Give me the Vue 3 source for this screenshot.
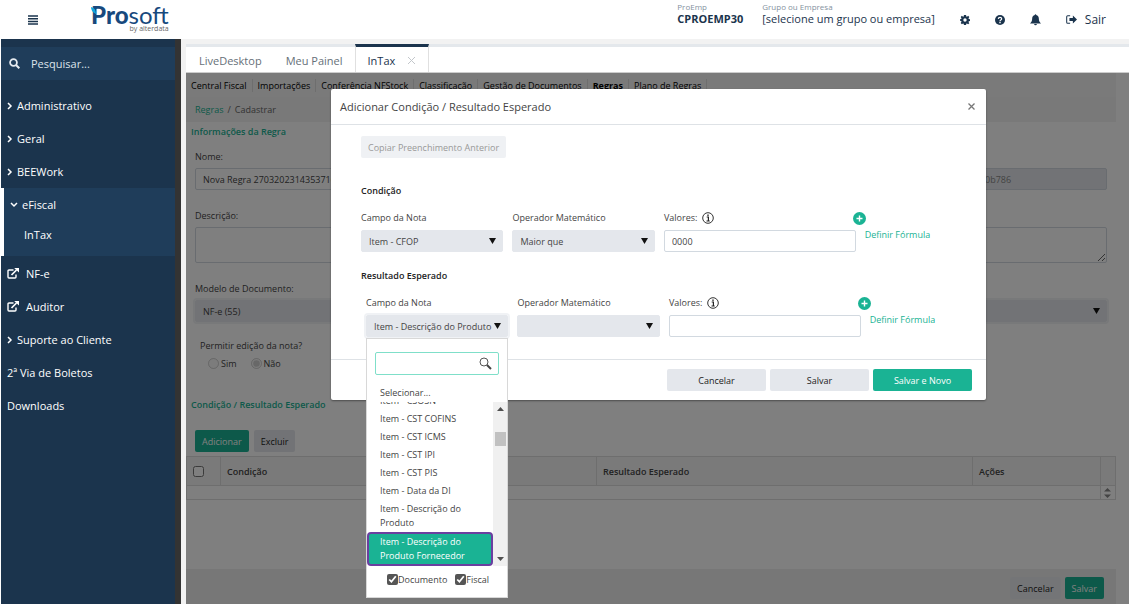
<script setup>
import { ref } from 'vue';

const menuTop = ['Administrativo', 'Geral', 'BEEWork'];
const tabs = ['LiveDesktop', 'Meu Painel'];
const sections = [
  'Central Fiscal',
  'Importações',
  'Conferência NFStock',
  'Classificação',
  'Gestão de Documentos',
  'Regras',
  'Plano de Regras',
];
const campos = [
  'Item - CSOSN',
  'Item - CST COFINS',
  'Item - CST ICMS',
  'Item - CST IPI',
  'Item - CST PIS',
  'Item - Data da DI',
  'Item - Descrição do Produto',
  'Item - Descrição do Produto Fornecedor',
];

const selected = ref('Item - Descrição do Produto Fornecedor');
const busca = ref('');
const edicao = ref('nao');
const documento = ref(true);
const fiscal = ref(true);

const rows = [
  { id: 'cond', title: 'Condição', campo: 'Item - CFOP', operador: 'Maior que', valor: '0000', open: false },
  { id: 'res', title: 'Resultado Esperado', campo: 'Item - Descrição do Produto', operador: '', valor: '', open: true },
];
</script>

<template>
  <div class="app">
    <header class="topbar">
      <button class="icon-btn burger" aria-label="Menu">
        <svg width="10" height="10" viewBox="0 0 10 10"><path d="M0 1h10M0 3.7h10M0 6.4h10M0 9.1h10" stroke="#1b344d" stroke-width="1.5" /></svg>
      </button>
      <a href="#" class="logo" aria-label="Prosoft by alterdata">
        <svg class="logo-mark" width="6" height="8" viewBox="0 0 6 8"><path d="M0 0Q5 1 5 7Q0 5 0 0Z" fill="#12a5dc" /></svg>
        <span class="logo-name"><b>Pro</b>soft</span>
        <span class="logo-by">by <b>alterdata</b></span>
      </a>
      <div class="account">
        <div class="info">
          <small>ProEmp</small>
          <strong>CPROEMP30</strong>
        </div>
        <div class="info company">
          <small>Grupo ou Empresa</small>
          <span>[selecione um grupo ou empresa]</span>
        </div>
        <button class="icon-btn" aria-label="Configurações">
          <svg width="10" height="10" viewBox="0 0 16 16"><path fill="#1b344d" fill-rule="evenodd" d="M6.300 0h3.400l.4 2.200 1.100.5L13 1.300l1.900 1.900-1.300 1.900.5 1.200 1.900.4v2.800l-1.900.4-.5 1.200 1.300 1.900-1.900 1.900-1.900-1.300-1.100.5L9.700 16H6.300l-.4-2-1.100-.5L3 14.700 1.100 12.800l1.300-1.900-.5-1.200L0 9.300V6.700l1.900-.4.5-1.200-1.300-1.900L3 1.300l1.800 1.400 1.100-.5zM8 5.300a2.700 2.700 0 1 0 0 5.400 2.700 2.700 0 0 0 0-5.400z" /></svg>
        </button>
        <button class="icon-btn" aria-label="Ajuda">
          <svg width="10" height="10" viewBox="0 0 16 16"><circle cx="8" cy="8" r="8" fill="#1b344d" /><path d="M5.300 6.200Q5.500 3.700 8 3.700T10.700 6Q10.700 7.300 9.300 8Q8 8.700 8 9.800" fill="none" stroke="#fff" stroke-width="2" /><rect x="6.900" y="11" width="2.200" height="2.200" fill="#fff" /></svg>
        </button>
        <button class="icon-btn" aria-label="Notificações">
          <svg width="11" height="12" viewBox="0 0 16 17"><path fill="#1b344d" d="M8 0a1 1 0 0 1 1 1.200C11.500 1.700 12.800 3.600 12.800 6c0 4 1.300 6 3.200 7.500H0C1.900 12 3.200 10 3.200 6c0-2.400 1.300-4.300 3.800-4.800A1 1 0 0 1 8 0zM6 14.200h4a2 2 0 0 1-4 0z" /></svg>
        </button>
        <a href="#" class="exit">
          <svg width="11" height="9" viewBox="0 0 16 13"><path d="M6 1H2.500Q1 1 1 2.500v8Q1 12 2.500 12H6" fill="none" stroke="#1b344d" stroke-width="1.500" /><path fill="#1b344d" d="M5 4.200h5V.700l6 5.800-6 5.800V8.800H5z" /></svg>
          Sair
        </a>
      </div>
    </header>

    <div class="layout">
      <aside class="sidebar">
        <label class="search">
          <svg width="11" height="11" viewBox="0 0 11 11"><circle cx="4.500" cy="4.500" r="3.400" fill="none" stroke="#e6ebf0" stroke-width="1.800" /><path d="M7 7l3.300 3.300" stroke="#e6ebf0" stroke-width="2" /></svg>
          <input type="text" placeholder="Pesquisar..." aria-label="Pesquisar" />
        </label>
        <nav>
          <a v-for="item in menuTop" :key="item" href="#" class="nav-item">
            <svg width="6" height="8" viewBox="0 0 6 8"><path d="M1 1l3 3-3 3" fill="none" stroke="#fff" stroke-width="1.500" /></svg>
            {{ item }}
          </a>
          <div class="nav-group">
            <a href="#" class="nav-item">
              <svg width="8" height="6" viewBox="0 0 8 6"><path d="M1 1l3 3 3-3" fill="none" stroke="#fff" stroke-width="1.500" /></svg>
              eFiscal
            </a>
            <a href="#" class="nav-item nav-sub">InTax</a>
          </div>
          <a v-for="item in ['NF-e', 'Auditor']" :key="item" href="#" class="nav-item external">
            <svg width="12" height="11" viewBox="0 0 12 11"><path d="M6.500 2H2Q1 2 1 3v6q0 1 1 1h6q1 0 1-1V6.500" fill="none" stroke="#fff" stroke-width="1.400" /><path d="M4.500 7l5-5" stroke="#fff" stroke-width="1.700" /><path d="M7.200 0H12v4.600z" fill="#fff" /></svg>
            {{ item }}
          </a>
          <a href="#" class="nav-item">
            <svg width="6" height="8" viewBox="0 0 6 8"><path d="M1 1l3 3-3 3" fill="none" stroke="#fff" stroke-width="1.500" /></svg>
            Suporte ao Cliente
          </a>
          <a href="#" class="nav-item">2ª Via de Boletos</a>
          <a href="#" class="nav-item">Downloads</a>
        </nav>
      </aside>

      <main class="main">
        <div class="tabs">
          <button v-for="tab in tabs" :key="tab" class="tab">{{ tab }}</button>
          <button class="tab active">
            InTax
            <svg width="9" height="9" viewBox="0 0 9 9"><path d="M1 1l7 7M8 1L1 8" stroke="#c3c7cb" stroke-width="1" /></svg>
          </button>
        </div>

        <div class="workspace">
          <div class="page">
            <nav class="sections">
              <a v-for="s in sections" :key="s" href="#" :class="{ current: s === 'Regras' }">{{ s }}</a>
            </nav>
            <div class="crumbs"><a href="#">Regras</a> <span>/</span> <span>Cadastrar</span></div>

            <h2>Informações da Regra</h2>
            <form class="form" @submit.prevent>
              <div class="two">
                <div class="field">
                  <label for="nome">Nome:</label>
                  <input id="nome" type="text" value="Nova Regra 27032023143537166" />
                </div>
                <div class="field right">
                  <input type="text" value="0b786" disabled aria-label="Identificador" />
                </div>
              </div>
              <div class="field">
                <label for="descricao">Descrição:</label>
                <textarea id="descricao"></textarea>
              </div>
              <div class="field">
                <label for="modelo">Modelo de Documento:</label>
                <div class="select glow">
                  <select id="modelo"><option>NF-e (55)</option></select>
                  <svg width="7" height="6" viewBox="0 0 7 6"><path d="M0 0h7L3.500 6z" fill="#111" /></svg>
                </div>
              </div>
              <fieldset>
                <legend>Permitir edição da nota?</legend>
                <label><input v-model="edicao" type="radio" value="sim" name="edicao" disabled />Sim</label>
                <label><input v-model="edicao" type="radio" value="nao" name="edicao" disabled />Não</label>
              </fieldset>
            </form>

            <h2>Condição / Resultado Esperado</h2>
            <div class="actions">
              <button class="btn primary">Adicionar</button>
              <button class="btn">Excluir</button>
            </div>
            <table>
              <thead>
                <tr>
                  <th class="c-check"><input type="checkbox" aria-label="Selecionar todos" /></th>
                  <th class="c-cond">Condição</th>
                  <th class="c-res">Resultado Esperado</th>
                  <th class="c-act">Ações</th>
                  <th class="c-bar"></th>
                </tr>
              </thead>
              <tbody>
                <tr>
                  <td colspan="4"></td>
                  <td class="c-bar">
                    <svg width="7" height="10" viewBox="0 0 7 10"><path d="M0 3.500L3.500 0 7 3.500zM0 6.500L3.500 10 7 6.500z" fill="#888" /></svg>
                  </td>
                </tr>
              </tbody>
            </table>
            <div class="page-footer">
              <button class="btn">Cancelar</button>
              <button class="btn primary">Salvar</button>
            </div>
          </div>

          <div class="overlay">
            <section class="modal" role="dialog" aria-labelledby="modal-title">
              <div class="modal-header">
                <h1 id="modal-title">Adicionar Condição / Resultado Esperado</h1>
                <button class="icon-btn" aria-label="Fechar">
                  <svg width="7" height="7" viewBox="0 0 7 7"><path d="M.5.5l6 6M6.500.5l-6 6" stroke="#777" stroke-width="1.300" /></svg>
                </button>
              </div>
              <div class="modal-body">
                <button class="btn copy" disabled>Copiar Preenchimento Anterior</button>
                <template v-for="row in rows" :key="row.id">
                  <h3>{{ row.title }}</h3>
                  <div class="row" :class="{ shifted: row.open }">
                    <div class="cell">
                      <label :for="row.id + '-campo'">Campo da Nota</label>
                      <div class="select" :class="{ glow: row.open }">
                        <select :id="row.id + '-campo'"><option>{{ row.campo }}</option></select>
                        <svg width="7" height="6" viewBox="0 0 7 6"><path d="M0 0h7L3.500 6z" fill="#111" /></svg>
                      </div>
                      <div v-if="row.open" class="dropdown">
                        <div class="find">
                          <input v-model="busca" type="text" aria-label="Buscar campo" />
                          <svg width="13" height="13" viewBox="0 0 13 13"><circle cx="5" cy="5" r="4" fill="none" stroke="#555" stroke-width="1" /><path d="M8 8l4 4" stroke="#444" stroke-width="2" /></svg>
                        </div>
                        <div class="option">Selecionar...</div>
                        <div class="list">
                          <ul role="listbox" aria-label="Campo da Nota">
                            <li
                              v-for="c in campos"
                              :key="c"
                              role="option"
                              class="option"
                              :class="{ selected: c === selected }"
                              @click="selected = c"
                            >{{ c }}</li>
                          </ul>
                          <div class="scroll">
                            <svg width="7" height="4" viewBox="0 0 7 4"><path d="M0 4L3.500 0 7 4z" fill="#505050" /></svg>
                            <span class="thumb"></span>
                            <svg width="7" height="4" viewBox="0 0 7 4"><path d="M0 0L3.500 4 7 0z" fill="#505050" /></svg>
                          </div>
                        </div>
                        <div class="checks">
                          <label><input v-model="documento" type="checkbox" />Documento</label>
                          <label><input v-model="fiscal" type="checkbox" />Fiscal</label>
                        </div>
                      </div>
                    </div>
                    <div class="cell">
                      <label :for="row.id + '-op'">Operador Matemático</label>
                      <div class="select">
                        <select :id="row.id + '-op'"><option>{{ row.operador }}</option></select>
                        <svg width="7" height="6" viewBox="0 0 7 6"><path d="M0 0h7L3.500 6z" fill="#111" /></svg>
                      </div>
                    </div>
                    <div class="cell">
                      <div class="label-line">
                        <label :for="row.id + '-valor'">Valores:</label>
                        <svg width="12" height="12" viewBox="0 0 12 12"><circle cx="6" cy="6" r="5.300" fill="none" stroke="#333" stroke-width="1" /><path d="M4.700 5h1.700v4M4.500 9h3.200" fill="none" stroke="#222" stroke-width="1.200" /><rect x="5.300" y="2.500" width="1.400" height="1.400" fill="#222" /></svg>
                        <button class="icon-btn add" aria-label="Adicionar valor">
                          <svg width="13" height="13" viewBox="0 0 13 13"><circle cx="6.500" cy="6.500" r="6.500" fill="#1ab394" /><path d="M6.500 3.500v6M3.500 6.500h6" stroke="#fff" stroke-width="1.400" /></svg>
                        </button>
                      </div>
                      <input :id="row.id + '-valor'" type="text" :value="row.valor" />
                    </div>
                    <a href="#" class="formula">Definir Fórmula</a>
                  </div>
                </template>
              </div>
              <div class="modal-footer">
                <button class="btn">Cancelar</button>
                <button class="btn">Salvar</button>
                <button class="btn primary">Salvar e Novo</button>
              </div>
            </section>
          </div>
        </div>
      </main>
    </div>
  </div>
</template>

<style>
body {
  margin: 0;
}
</style>

<style scoped>
* {
  box-sizing: border-box;
}
.app {
  min-height: 100vh;
  display: flex;
  flex-direction: column;
  background: #fff;
  color: #444;
  font-family: "Open Sans", "Noto Sans", sans-serif;
  font-size: 9px;
}
a {
  color: inherit;
  text-decoration: none;
}
button, input, select, textarea {
  font: inherit;
  color: inherit;
  margin: 0;
}
svg {
  display: block;
  flex-shrink: 0;
}
h1, h2, h3 {
  margin: 0;
  font-weight: 600;
}
.icon-btn {
  border: 0;
  padding: 0;
  background: none;
  cursor: pointer;
}

/* top bar */
.topbar {
  height: 39px;
  display: flex;
  align-items: center;
  padding: 0 23px 0 28px;
  color: #1b344d;
}
.logo {
  position: relative;
  margin-left: 53px;
  padding-bottom: 2px;
  display: flex;
  flex-direction: column;
  color: #17497d;
}
.logo-mark {
  position: absolute;
  left: 0;
  top: 2px;
}
.logo-name {
  font-family: Lato, sans-serif;
  font-size: 24px;
  line-height: 20px;
}
.logo-name b {
  font-weight: 900;
}
.logo-by {
  align-self: flex-end;
  font-size: 7px;
  line-height: 8px;
  color: #666;
}
.logo-by b {
  font-weight: 500;
}
.account {
  margin-left: auto;
  display: flex;
  align-items: center;
  gap: 25px;
}
.info {
  display: flex;
  flex-direction: column;
  align-self: flex-start;
  font-size: 11px;
  line-height: 14px;
  padding-bottom: 12px;
}
.info small {
  font-size: 8px;
  line-height: 10px;
  color: #8492a0;
}
.info strong {
  font-weight: 700;
}
.company {
  margin: 0 0 0 -6px;
}
.exit {
  display: flex;
  align-items: center;
  gap: 8px;
  font-size: 12px;
}

.layout {
  flex: 1;
  display: flex;
  background: #f2f2f2;
}

/* sidebar */
.sidebar {
  width: 181px;
  flex-shrink: 0;
  padding-top: 8px;
  background: #1b344d;
  border-left: 1px solid #fff;
  border-right: 6px solid #333;
  color: #fff;
}
.search {
  height: 33px;
  display: flex;
  align-items: center;
  gap: 11px;
  padding: 0 8px;
  margin-bottom: 9px;
  background: #1f3d5a;
}
.search input {
  flex: 1;
  min-width: 0;
  outline: none;
  font-size: 11px;
}
.search input::placeholder {
  color: #dce3ea;
  opacity: 1;
}
.nav-item {
  height: 33px;
  display: flex;
  align-items: center;
  gap: 4px;
  padding-left: 6px;
  font-size: 11px;
  font-weight: 500;
}
.nav-group {
  height: 68px;
  margin-bottom: 1px;
  border-left: 3px solid #fff;
  background: #1f3d5a;
}
.nav-sub {
  height: 26px;
  padding-left: 20px;
}
.nav-item.external {
  gap: 7px;
}

/* tabs */
.main {
  flex: 1;
  min-width: 0;
  display: flex;
  flex-direction: column;
  padding: 5px 0 0 5px;
}
.tabs {
  height: 29px;
  display: flex;
  background: #fff;
  border-bottom: 1px solid #ccc;
}
.tabs::after {
  content: "";
  flex: 1;
  border-top: 3px solid #e4e8ec;
}
.tab {
  border: 0;
  border-top: 3px solid #e4e8ec;
  background: #fff;
  padding: 2px 12px 0;
  font-size: 11px;
  color: #666f78;
  cursor: pointer;
}
.tab:first-child {
  padding-left: 13px;
}
.tab.active {
  display: flex;
  align-items: center;
  gap: 12px;
  border-top-color: #1b344d;
  border-left: 1px solid #e0e0e0;
  border-right: 1px solid #e0e0e0;
  color: #1b344d;
  font-weight: 500;
}

/* page behind the dialog */
.workspace {
  flex: 1;
  position: relative;
  display: flex;
  background: #fff;
}
.page {
  flex: 1;
  min-width: 0;
  display: flex;
  flex-direction: column;
  margin-right: 13px;
}
.sections {
  height: 24px;
  display: flex;
  align-items: center;
  background: #f4f4f4;
  color: #000;
}
.sections a {
  padding: 0 5px;
  border-right: 1px solid #ddd;
}
.sections .current {
  font-weight: 700;
}
.crumbs {
  height: 25px;
  display: flex;
  align-items: center;
  gap: 4px;
  padding: 0 9px 1px;
  background: #f2f2f2;
  color: #666;
}
.crumbs a, h2 {
  color: #1ab394;
}
h2 {
  padding-left: 5px;
  font-size: 9px;
  line-height: 20px;
}
.form {
  padding: 0 9px;
  display: flex;
  flex-direction: column;
  gap: 16px;
  margin-bottom: 23px;
}
.two {
  display: grid;
  grid-template-columns: 1fr 1fr;
  gap: 10px;
  align-items: end;
}
.field {
  display: flex;
  flex-direction: column;
}
.field label {
  line-height: 12px;
  padding: 4px 0 5px;
}
.two .field label {
  padding-top: 9px;
}
input[type="text"], textarea, select {
  width: 100%;
  height: 22px;
  padding: 0 7px;
  border: 1px solid #d2d9e0;
  border-radius: 2px;
  background: #fff;
}
.right input[type="text"] {
  padding-left: 328px;
}
input[type="text"]:disabled {
  background: #e4e7ec;
  color: #888;
}
textarea {
  display: block;
  height: 36px;
}
.search input[type="text"] {
  border: 0;
  background: none;
  padding: 0;
}
.select {
  display: grid;
  align-items: center;
  border-radius: 2px;
}
.select > * {
  grid-area: 1 / 1;
}
.select select {
  appearance: none;
  background: #e4e7ec;
  border-color: #e4e7ec;
}
.select svg {
  justify-self: end;
  margin-right: 7px;
  pointer-events: none;
}
.glow {
  box-shadow: 0 0 0 2px #f0f2f5;
}
fieldset {
  border: 0;
  margin: 0;
  padding: 0 0 0 13px;
  display: flex;
  gap: 14px;
}
legend {
  margin-left: -8px;
  padding: 0;
  line-height: 16px;
}
fieldset label {
  display: flex;
  align-items: center;
  gap: 2px;
  height: 18px;
}
fieldset input {
  width: 11px;
  height: 11px;
}
.actions {
  display: flex;
  gap: 5px;
  padding: 15px 9px 4px;
}
.btn {
  height: 22px;
  padding: 0 7px;
  border: 0;
  border-radius: 2px;
  background: #e4e7ec;
  color: #222;
  cursor: pointer;
}
.btn.primary {
  background: #1ab394;
  color: #fff;
}
.btn:disabled {
  background: #eff1f4;
  color: #999;
}
table {
  width: 100%;
  border-collapse: collapse;
  table-layout: fixed;
}
th, td {
  border: 1px solid #dcdcdc;
  padding: 0 6px;
  text-align: left;
}
th {
  height: 29px;
  background: #f5f5f5;
  font-weight: 600;
}
td {
  height: 14px;
}
th input {
  display: block;
  width: 11px;
  height: 11px;
}
.c-check {
  width: 34px;
}
.c-act {
  width: 128px;
}
.c-bar {
  width: 15px;
  padding: 0 3px;
}
.page-footer {
  margin-top: auto;
  height: 35px;
  display: flex;
  justify-content: flex-end;
  align-items: center;
  gap: 4px;
  padding: 3px 12px 0;
  background: #eee;
}
.page-footer .btn:first-child {
  background: #e9ebef;
}

/* dialog */
.overlay {
  position: absolute;
  inset: 0;
  background: rgba(0, 0, 0, 0.5);
  display: flex;
  justify-content: center;
  align-items: flex-start;
  padding: 16px 18px 0 20px;
}
.modal {
  width: 100%;
  max-width: 655px;
  background: #fff;
  border-radius: 2px;
  box-shadow: 0 1px 2px rgba(0, 0, 0, 0.4);
}
.modal-header {
  height: 36px;
  display: flex;
  align-items: center;
  justify-content: space-between;
  padding: 0 11px 0 9px;
  border-bottom: 1px solid #dee2e6;
}
h1 {
  font-size: 11px;
  font-weight: 500;
}
.modal-body {
  padding: 11px 14px 22px 30px;
}
.copy {
  display: block;
}
h3 {
  margin-top: 16px;
  font-size: 9px;
  line-height: 16px;
  color: #222;
}
.copy + h3 {
  margin-top: 25px;
}
.row {
  display: grid;
  grid-template-columns: 142fr 142fr 191fr 107fr;
  gap: 9px;
  margin-top: 11px;
}
.row.shifted {
  margin-left: 5px;
  margin-right: -5px;
}
.cell {
  position: relative;
  min-width: 0;
}
.cell > label, .label-line {
  display: flex;
  align-items: center;
  line-height: 16px;
  height: 20px;
  padding-bottom: 4px;
}
.label-line {
  gap: 5px;
  margin-right: -10px;
}
.add {
  margin-left: auto;
}
.formula {
  color: #1ab394;
  line-height: 12px;
  padding-top: 19px;
}
.dropdown {
  position: absolute;
  top: 43px;
  left: 0;
  right: 0;
  background: #fff;
  border: 1px solid #d8d8d8;
  z-index: 1;
}
.find {
  display: grid;
  align-items: center;
  margin: 13px 8px 9px;
}
.find > * {
  grid-area: 1 / 1;
}
.find svg {
  justify-self: end;
  margin-right: 7px;
}
.find input[type="text"] {
  height: 23px;
  border-color: #7fdfc9;
  outline: none;
}
.option {
  padding: 2px 13px;
  line-height: 14px;
}
.list {
  height: 164px;
  display: flex;
  overflow: hidden;
}
.list ul {
  flex: 1;
  min-width: 0;
  margin: -10px 0 0;
  padding: 0;
  list-style: none;
}
.option.selected {
  padding: 1px 11px;
  border: 2px solid #6b3fa0;
  border-radius: 4px;
  background: #1ab394;
  color: #fff;
}
.scroll {
  width: 14px;
  display: flex;
  flex-direction: column;
  align-items: center;
  padding: 5px 0;
  background: #f0f0f0;
}
.thumb {
  width: 11px;
  height: 14px;
  margin: 21px 0 auto;
  background: #c1c1c1;
}
.checks {
  display: flex;
  gap: 8px;
  padding: 7px 20px 11px;
}
.checks label {
  display: flex;
  align-items: center;
  line-height: 13px;
}
.checks input {
  width: 11px;
  height: 11px;
  accent-color: #555;
}
.modal-footer {
  display: flex;
  justify-content: flex-end;
  gap: 4px;
  padding: 9px 14px;
  border-top: 1px solid #dee2e6;
}
.modal-footer .btn {
  width: 99px;
}
</style>
